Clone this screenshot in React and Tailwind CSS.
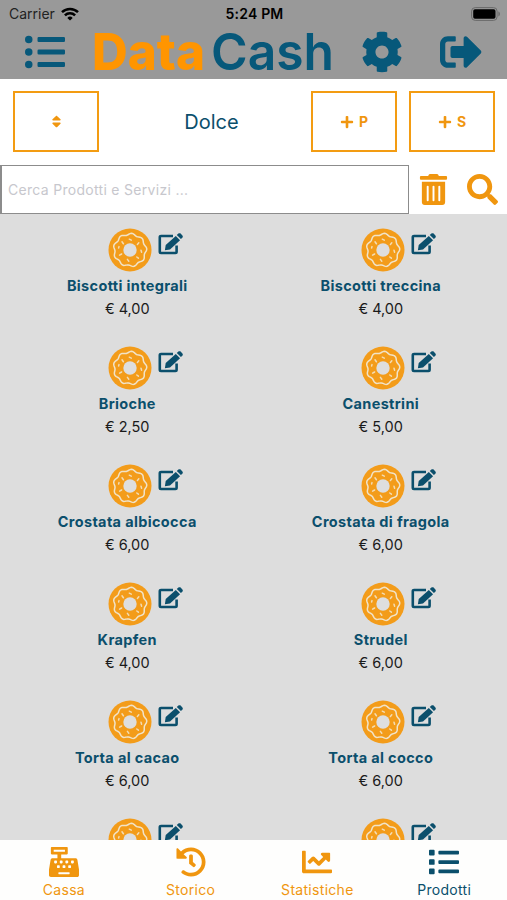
import { useState } from 'react';
import {
  FaListUl,
  FaList,
  FaCog,
  FaSignOutAlt,
  FaSort,
  FaPlus,
  FaTrashAlt,
  FaSearch,
  FaCashRegister,
  FaHistory,
  FaChartLine,
} from 'react-icons/fa';

const products = [
  { id: 1, name: 'Biscotti integrali', price: '4,00' },
  { id: 2, name: 'Biscotti treccina', price: '4,00' },
  { id: 3, name: 'Brioche', price: '2,50' },
  { id: 4, name: 'Canestrini', price: '5,00' },
  { id: 5, name: 'Crostata albicocca', price: '6,00' },
  { id: 6, name: 'Crostata di fragola', price: '6,00' },
  { id: 7, name: 'Krapfen', price: '4,00' },
  { id: 8, name: 'Strudel', price: '6,00' },
  { id: 9, name: 'Torta al cacao', price: '6,00' },
  { id: 10, name: 'Torta al cocco', price: '6,00' },
  { id: 11 },
  { id: 12 },
];

const tabs = [
  { id: 'cassa', label: 'Cassa', icon: FaCashRegister },
  { id: 'storico', label: 'Storico', icon: FaHistory },
  { id: 'statistiche', label: 'Statistiche', icon: FaChartLine },
  { id: 'prodotti', label: 'Prodotti', icon: FaList },
];

// wavy icing edge, 9 bumps around the centre
const icing = Array.from({ length: 90 }, (_, i) => {
  const a = (i / 90) * Math.PI * 2;
  const r = 15.9 + 0.9 * Math.cos(9 * a + 0.6);
  return `${(22 + r * Math.cos(a)).toFixed(2)},${(22 + r * Math.sin(a)).toFixed(2)}`;
}).join(' ');

function WifiIcon() {
  return (
    <svg width="18" height="14" viewBox="0 0 18 14" fill="none" stroke="#000" strokeWidth="2.5">
      <path d="M1 5.2a11.4 11.4 0 0 1 16 0" />
      <path d="M3.9 8.3a7.2 7.2 0 0 1 10.2 0" />
      <path d="M9 13.6 6.3 10.9a3.8 3.8 0 0 1 5.4 0z" fill="#000" stroke="none" />
    </svg>
  );
}

function BatteryIcon() {
  return (
    <svg width="30" height="14" viewBox="0 0 30 14">
      <rect x="0.6" y="0.6" width="25.5" height="12.8" rx="3.6" fill="none" stroke="#6a6a6a" />
      <rect x="2.2" y="2.2" width="22.3" height="9.6" rx="1.8" fill="#000" />
      <path d="M27.4 4.6c2 .6 2 4.2 0 4.8z" fill="#6a6a6a" />
    </svg>
  );
}

function Donut() {
  return (
    <svg width="44" height="44" viewBox="0 0 44 44">
      <circle cx="22" cy="22" r="21.5" fill="#f39c1a" />
      <polygon points={icing} fill="none" stroke="#f1e3c8" strokeWidth="1.5" strokeLinejoin="round" />
      <circle cx="22" cy="22" r="6.7" fill="#dedede" />
      <g stroke="#f3dcb4" strokeWidth="1.5" strokeLinecap="round">
        <path d="M14 13.8l1.4 2" />
        <path d="M21.3 11.2l2 1" />
        <path d="M30.8 14.8l-1.4 1.6" />
        <path d="M33 22.2l.6 2" />
        <path d="M28.8 29l1.6 1.2" />
        <path d="M19.4 31.4l1.4 1.8" />
        <path d="M11.6 27.2l2-1.2" />
        <path d="M10.6 20l.4-1.4" />
      </g>
    </svg>
  );
}

function EditIcon() {
  return (
    <svg className="mt-[4px]" width="26" height="24" viewBox="0 0 26 24" fill="#0b4f6c">
      <path
        d="M15 4H3C2.300 4 1.800 4.400 1.800 5.200v14.600c0 .8.500 1.200 1.200 1.200h14.400c.8 0 1.200-.4 1.200-1.200v-6.400"
        fill="none"
        stroke="#0b4f6c"
        strokeWidth="2.600"
      />
      <path d="M6.900 18.300l.8-5.200L17.800 3.900l4.300 4.400-10.100 9.200z" />
      <path d="M18.800 3l1.600-1.400c.7-.6 1.600-.6 2.200 0l1.800 2c.6.700.6 1.600-.1 2.200l-1.400 1.300z" />
    </svg>
  );
}

function Header() {
  return (
    <header className="h-[79px] shrink-0 bg-[#999999]">
      <div className="grid h-[27px] grid-cols-3 items-center pl-[9px] pr-[6px] text-[14px] text-black">
        <div className="flex items-center gap-[6px]">
          <span className="text-[#222222]">Carrier</span>
          <WifiIcon />
        </div>
        <span className="pr-[1px] text-center font-semibold tracking-[0.2px]">5:24 PM</span>
        <div className="flex justify-end">
          <BatteryIcon />
        </div>
      </div>
      <div className="flex h-[50px] items-center pl-[25px] text-[#07587a]">
        <FaListUl size={40} />
        <svg className="ml-[27px] overflow-visible" width="242" height="50" viewBox="0 0 242 50">
          <text
            x="0"
            y="43"
            fontSize="51"
            fontWeight="800"
            textLength="113"
            lengthAdjust="spacingAndGlyphs"
            fill="#ff9500"
          >
            Data
          </text>
          <text
            x="119"
            y="43"
            fontSize="51"
            fontWeight="600"
            textLength="123"
            lengthAdjust="spacingAndGlyphs"
            fill="#07587a"
          >
            Cash
          </text>
        </svg>
        <FaCog className="ml-[27px]" size={42} />
        <FaSignOutAlt className="ml-[37px]" size={42} />
      </div>
    </header>
  );
}

function AddButton({ label }) {
  return (
    <button
      type="button"
      className="flex h-[61px] w-[86px] items-center justify-center gap-[5px] border-[2.5px] border-[#f39c12] text-[14px] font-bold"
    >
      <FaPlus size={14} />
      {label}
    </button>
  );
}

function Toolbar() {
  return (
    <div className="flex h-[86px] shrink-0 items-center bg-white pb-px pl-[13px] pr-[12px] text-[#f0960f]">
      <button
        type="button"
        className="flex h-[61px] w-[86px] items-center justify-center border-[2.5px] border-[#f39c12]"
      >
        <FaSort size={15} />
      </button>
      <h1 className="flex-1 pl-[13px] pt-px text-center text-[20px] text-[#0b4f6c]">Dolce</h1>
      <div className="flex gap-[12px]">
        <AddButton label="P" />
        <AddButton label="S" />
      </div>
    </div>
  );
}

function SearchBar() {
  const [query, setQuery] = useState('');

  return (
    <div className="flex h-[49px] shrink-0 items-center bg-white text-[#f0960f]">
      <input
        type="text"
        value={query}
        onChange={(e) => setQuery(e.target.value)}
        placeholder="Cerca Prodotti e Servizi ..."
        className="h-[49px] w-[409px] border border-l-2 border-[#8c8c8c] bg-white pl-[6px] text-[14px] tracking-[0.3px] text-black placeholder-[#c7c7cd] outline-none"
      />
      <FaTrashAlt className="ml-[9px]" size={31} />
      <FaSearch className="ml-[18px]" size={31} />
    </div>
  );
}

function ProductCard({ product }) {
  return (
    <div className="flex h-[118px] flex-col items-center pt-[14px]">
      <div className="flex items-start gap-[6px] pl-[38px]">
        <Donut />
        <EditIcon />
      </div>
      {product.name && (
        <>
          <p className="mt-[3px] pl-[1px] text-[14.5px] leading-[22px] font-bold tracking-[0.35px] text-[#0b4f6c]">
            {product.name}
          </p>
          <p className="pl-[1px] text-[14.5px] leading-[23px] text-[#1a1a1a]">€ {product.price}</p>
        </>
      )}
    </div>
  );
}

function TabBar() {
  const [active, setActive] = useState('prodotti');

  return (
    <nav className="grid h-[60px] shrink-0 grid-cols-4 bg-[#fefefd]">
      {tabs.map(({ id, label, icon: Icon }) => (
        <button
          key={id}
          type="button"
          onClick={() => setActive(id)}
          className={`flex flex-col items-center pl-[1px] pt-[7px] text-[14px] tracking-[0.3px] ${active === id ? 'text-[#0b4f6c]' : 'text-[#f0960f]'}`}
        >
          <Icon size={30} />
          <span className="mt-[2px] leading-[22px]">{label}</span>
        </button>
      ))}
    </nav>
  );
}

export default function App() {
  return (
    <div className="flex h-[900px] w-[507px] flex-col overflow-hidden bg-[#dddddd] font-['Inter',sans-serif]">
      <Header />
      <Toolbar />
      <SearchBar />
      <main className="grid min-h-0 flex-1 auto-rows-[118px] grid-cols-2 overflow-hidden">
        {products.map((product) => (
          <ProductCard key={product.id} product={product} />
        ))}
      </main>
      <TabBar />
    </div>
  );
}
